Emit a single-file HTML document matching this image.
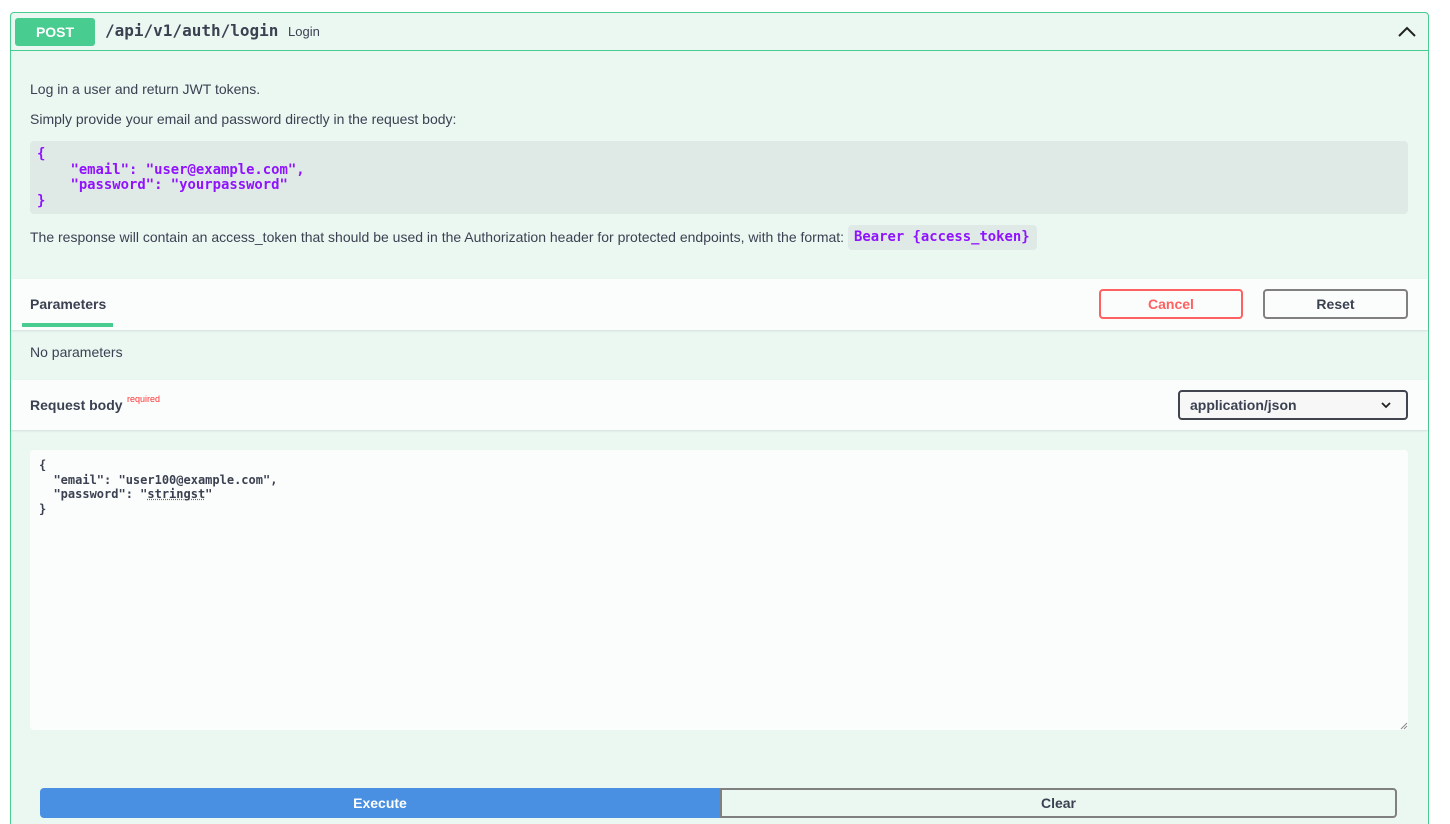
<!DOCTYPE html>
<html><head><style>
*{box-sizing:border-box;margin:0;padding:0}
html,body{width:1450px;height:824px;overflow:hidden}
body{background:#fff;font-family:"Liberation Sans",sans-serif;color:#3b4151;position:relative}
.a{position:absolute}
.mono{font-family:"DejaVu Sans Mono","Liberation Mono",monospace}
</style></head><body>
<div class="a" style="left:10px;top:12px;width:1419px;height:812px;border:1px solid #49cc90;border-bottom:none;border-radius:4px 4px 0 0;background:#ebf8f2"></div>
<div class="a" style="left:11px;top:50px;width:1417px;height:1px;background:#49cc90"></div>
<div class="a" style="left:15px;top:18px;width:80px;height:28px;background:#49cc90;border-radius:3px;color:#fff;font-weight:bold;font-size:14px;text-align:center;line-height:28px">POST</div>
<div class="a mono" style="left:105px;top:21px;font-size:16px;font-weight:bold;color:#3b4151">/api/v1/auth/login</div>
<div class="a" style="left:288px;top:24px;font-size:13px">Login</div>
<svg class="a" style="left:1397px;top:23px" width="20" height="16" viewBox="0 0 20 16"><path d="M2 13 L10 5 L18 13" fill="none" stroke="#222" stroke-width="2"/></svg>
<div class="a" style="left:30px;top:81px;font-size:14px">Log in a user and return JWT tokens.</div>
<div class="a" style="left:30px;top:111px;font-size:14px">Simply provide your email and password directly in the request body:</div>
<div class="a" style="left:30px;top:141px;width:1378px;height:73px;background:#dfeae6;border-radius:4px"></div>
<pre class="a mono" style="left:37px;top:147px;font-size:13.9px;line-height:15.5px;font-weight:bold;color:#9012fe">{
    "email": "user@example.com",
    "password": "yourpassword"
}</pre>
<div class="a" style="left:30px;top:229px;font-size:14px">The response will contain an access_token that should be used in the Authorization header for protected endpoints, with the format:</div>
<div class="a mono" style="left:848px;top:225px;width:189px;height:25px;background:#dfeae6;border-radius:4px;color:#9012fe;font-weight:bold;font-size:13.9px;line-height:25px;padding-left:6px">Bearer {access_token}</div>
<div class="a" style="left:11px;top:279px;width:1417px;height:51px;background:#fbfdfc;box-shadow:0 1px 2px rgba(0,0,0,.1)"></div>
<div class="a" style="left:30px;top:296px;font-size:14px;font-weight:bold">Parameters</div>
<div class="a" style="left:22px;top:323px;width:91px;height:4px;background:#49cc90"></div>
<div class="a" style="left:1099px;top:289px;width:144px;height:30px;border:2px solid #ff6060;border-radius:4px;color:#ff6060;font-weight:bold;font-size:14px;text-align:center;line-height:26px">Cancel</div>
<div class="a" style="left:1263px;top:289px;width:145px;height:30px;border:2px solid #808080;border-radius:4px;font-weight:bold;font-size:14px;text-align:center;line-height:26px">Reset</div>
<div class="a" style="left:30px;top:344px;font-size:14px">No parameters</div>
<div class="a" style="left:11px;top:380px;width:1417px;height:50px;background:#fbfdfc;box-shadow:0 1px 2px rgba(0,0,0,.1)"></div>
<div class="a" style="left:30px;top:397px;font-size:14px;font-weight:bold">Request body</div>
<div class="a" style="left:127px;top:394px;font-size:9px;color:#ff3333">required</div>
<div class="a" style="left:1178px;top:390px;width:230px;height:30px;border:2px solid #41444e;border-radius:4px;background:#f7f7f7;font-weight:bold;font-size:14px;line-height:26px;padding-left:10px">application/json</div>
<svg class="a" style="left:1380px;top:400px" width="12" height="10" viewBox="0 0 12 10"><path d="M2 3 L6 7 L10 3" fill="none" stroke="#222" stroke-width="1.8"/></svg>
<div class="a" style="left:30px;top:450px;width:1378px;height:280px;background:#fbfdfc;border-radius:4px"></div>
<pre class="a mono" style="left:39px;top:458px;font-size:12px;line-height:14.5px;color:#3b4151;font-weight:bold">{
  "email": "user100@example.com",
  "password": "<span style="text-decoration:underline dotted #e33">stringst</span>"
}</pre>
<svg class="a" style="left:1400px;top:722px" width="8" height="8"><path d="M1 7 L7 1 M4 7 L7 4" stroke="#888"/></svg>
<div class="a" style="left:40px;top:788px;width:680px;height:30px;background:#4990e2;border-radius:4px 0 0 4px;color:#fff;font-weight:bold;font-size:14px;text-align:center;line-height:30px">Execute</div>
<div class="a" style="left:720px;top:788px;width:677px;height:30px;border:2px solid #808080;border-radius:0 4px 4px 0;font-weight:bold;font-size:14px;text-align:center;line-height:26px">Clear</div>
</body></html>
